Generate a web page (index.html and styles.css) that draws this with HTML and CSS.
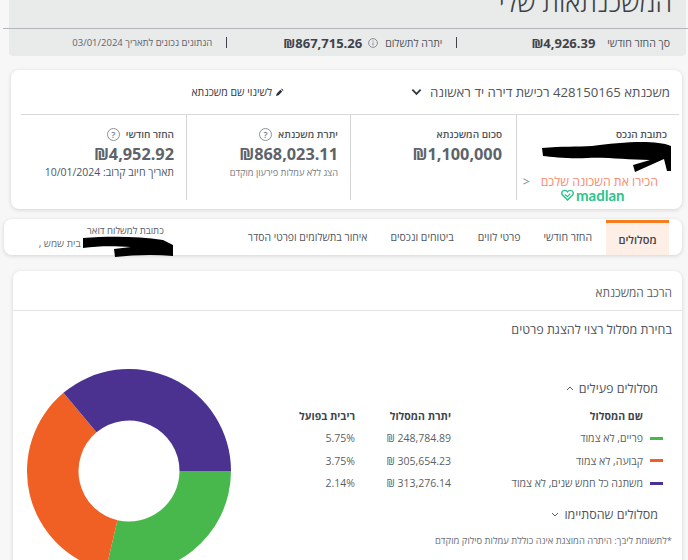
FILE: index.html
```html
<!DOCTYPE html>
<html lang="he" dir="rtl">
<head>
<meta charset="utf-8">
<title>המשכנתאות שלי</title>
<link rel="stylesheet" href="styles.css">
</head>
<body>
<div class="page">
  <header class="head">
    <h1 class="title">המשכנתאות שלי</h1>
    <div class="summary">
      <span class="sum-label">סך החזר חודשי</span>
      <b class="sum-value sum-first">₪4,926.39</b>
      <span class="sum-sep"></span>
      <span class="sum-label">יתרה לתשלום</span>
      <svg class="sum-info" viewBox="0 0 12 12"><circle cx="6" cy="6" r="4.400" fill="none" stroke="#8a8f96"/><path d="M6 5.500v3M6 3.500v1" stroke="#8a8f96"/></svg>
      <b class="sum-value">₪867,715.26</b>
      <span class="sum-sep sum-sep2"></span>
      <span class="sum-date">הנתונים נכונים לתאריך 03/01/2024</span>
    </div>
  </header>

  <section class="card loan">
    <div class="loan-top">
      <span class="loan-name">משכנתא 428150165 רכישת דירה יד ראשונה</span>
      <svg class="chev" viewBox="0 0 12 8"><path d="M1.500 1.500 6 6l4.500-4.500" fill="none" stroke="#33383e" stroke-width="2"/></svg>
      <span class="rename">
        <svg class="pencil" viewBox="0 0 10 10"><path d="M1 9l1-3 4-4 2 2-4 4zM6.800 1.200l.7-.7 2 2-.7.7z" fill="#2c3036"/></svg>
        לשינוי שם משכנתא
      </span>
    </div>
    <div class="stats">
      <div class="stat stat-address">
        <div class="stat-label">כתובת הנכס</div>
        <a class="madlan-link"><span class="madlan-text">הכירו את השכונה שלכם</span><span class="madlan-arrow">&lt;</span></a>
        <div class="madlan-logo">
          <span class="madlan-word" dir="ltr">madlan</span>
          <svg class="madlan-heart" viewBox="0 0 14 13"><path d="M7 12 1.500 6.500C0 4.500 1 1.500 4 1.500c1.300 0 2.300.6 3 1.500.7-.9 1.700-1.500 3-1.500 3 0 4 3 2.500 5Z" fill="none" stroke="#2dc38b" stroke-width="1.600"/><path d="m4 6 3 2 3-3" fill="none" stroke="#2dc38b" stroke-width="1.300"/></svg>
        </div>
        <svg class="scribble scribble-a" viewBox="0 0 130 30"><path d="M0 6C20 4 35 5 50 4C65 2 85 0 100 0C112 0 122 1 129 4L129 29L125 29L122 17L93 30L91 23L108 18C85 18 65 15 45 16C28 17 10 15 1 14Z" fill="#000"/></svg>
      </div>
      <div class="stat stat-total">
        <div class="stat-label">סכום המשכנתא</div>
        <div class="stat-value">₪1,100,000</div>
      </div>
      <div class="stat">
        <div class="stat-label">יתרת משכנתא <span class="q">?</span></div>
        <div class="stat-value">₪868,023.11</div>
        <div class="stat-note">הצג ללא עמלות פירעון מוקדם</div>
      </div>
      <div class="stat stat-last">
        <div class="stat-label">החזר חודשי <span class="q">?</span></div>
        <div class="stat-value">₪4,952.92</div>
        <div class="stat-sub">תאריך חיוב קרוב: 10/01/2024</div>
      </div>
    </div>
  </section>

  <nav class="card tabs">
    <span class="tab tab-active">מסלולים</span>
    <span class="tab tab1">החזר חודשי</span>
    <span class="tab tab2">פרטי לווים</span>
    <span class="tab tab3">ביטוחים ונכסים</span>
    <span class="tab tab4">איחור בתשלומים ופרטי הסדר</span>
    <div class="postal">
      <div class="postal-label">כתובת למשלוח דואר</div>
      <div class="postal-value">בית שמש ,</div>
      <svg class="scribble scribble-b" viewBox="0 0 90 22"><path d="M0 2C25 0 55 0 80 4L90 9L90 20C70 18 50 19 32 21L31 13L48 11C30 10 15 10 0 12Z" fill="#000"/></svg>
    </div>
  </nav>

  <section class="card panel">
    <div class="panel-title">הרכב המשכנתא</div>
    <div class="panel-body">
      <div class="pick">בחירת מסלול רצוי להצגת פרטים</div>
      <div class="split">
        <div class="details">
          <div class="group">מסלולים פעילים <svg class="caret" viewBox="0 0 8 5"><path d="M1 4 4 1l3 3" fill="none" stroke="#5a6068"/></svg></div>
          <table class="tracks">
            <thead>
              <tr><th class="c-name">שם המסלול</th><th class="c-bal">יתרת המסלול</th><th class="c-rate">ריבית בפועל</th></tr>
            </thead>
            <tbody>
              <tr><td class="c-name"><i class="sw sw-g"></i>פריים, לא צמוד</td><td class="c-bal">248,784.89 ₪</td><td class="c-rate">5.75%</td></tr>
              <tr><td class="c-name"><i class="sw sw-o"></i>קבועה, לא צמוד</td><td class="c-bal">305,654.23 ₪</td><td class="c-rate">3.75%</td></tr>
              <tr><td class="c-name"><i class="sw sw-p"></i>משתנה כל חמש שנים, לא צמוד</td><td class="c-bal">313,276.14 ₪</td><td class="c-rate">2.14%</td></tr>
            </tbody>
          </table>
          <div class="group group2">מסלולים שהסתיימו <svg class="caret" viewBox="0 0 8 5"><path d="M1 1l3 3 3-3" fill="none" stroke="#5a6068"/></svg></div>
          <div class="foot">*לתשומת ליבך: היתרה המוצגת אינה כוללת עמלות סילוק מוקדם</div>
        </div>
        <svg class="donut" viewBox="0 0 204 204">
          <path d="M204 102A102 102 0 0 1 78.700 201.300L90.470 151.170A50.500 50.500 0 0 0 152.500 102Z" fill="#48b74c"/>
          <path d="M78.700 201.300A102 102 0 0 1 36.430 23.860L69.540 63.310A50.500 50.500 0 0 0 90.470 151.170Z" fill="#f06025"/>
          <path d="M36.430 23.860A102 102 0 0 1 204 102L152.500 102A50.500 50.500 0 0 0 69.540 63.310Z" fill="#4b3291"/>
        </svg>
      </div>
    </div>
  </section>
</div>
</body>
</html>
```
FILE: styles.css
```css
* { box-sizing: border-box; }
html, body { margin: 0; padding: 0; }
body {
  background: #f7f7f7;
  font-family: "Open Sans", "Noto Sans", "Liberation Sans", sans-serif;
  color: #4f555c;
}
.page { width: 688px; height: 560px; overflow: hidden; }

.head { margin-left: 3px; }
.title {
  height: 29px;
  margin: 0;
  padding-right: 16px;
  font-size: 26.700px;
  font-weight: 300;
  line-height: 4px;
  color: #3d4248;
  background: linear-gradient(#e9eaea, #e9eaea) 6px 0 / 677px 100% no-repeat;
  border-bottom: 1px solid #b4b5bd;
  overflow: hidden;
  white-space: nowrap;
}
.summary {
  display: flex;
  align-items: center;
  height: 27px;
  margin: 0 2px 0 6px;
  padding-right: 16px;
  background: #e9eaea;
  border-radius: 0 0 4px 4px;
  font-size: 10.500px;
  white-space: nowrap;
}
.sum-value { font-size: 13px; font-weight: 700; color: #3f444b; }
.sum-first { margin-right: 12px; }
.sum-sep { width: 1px; height: 11px; background: #3f444b; margin: 0 74px 0 14px; }
.sum-sep2 { margin: 0 56px 0 14px; }
.sum-info { width: 12px; height: 12px; margin: 0 6px 0 5px; }
.sum-date { font-size: 9.500px; color: #5f646b; }

.card {
  background: #fff;
  border-radius: 8px;
  box-shadow: 0 1px 4px rgba(0, 0, 0, .14);
}
.loan {
  height: 139px;
  margin: 14px 6px 0 11px;
  padding: 0 3px 0 10px;
  display: flex;
  flex-direction: column;
}
.loan-top {
  height: 45px;
  display: flex;
  align-items: center;
  padding-right: 9px;
  border-bottom: 1px solid #d9d9d9;
  white-space: nowrap;
}
.loan-name { font-size: 13.200px; color: #50555c; }
.chev { width: 11px; height: 8px; margin-right: 8px; }
.rename { display: flex; align-items: center; gap: 3px; margin-right: 127px; font-size: 10.500px; color: #33383e; }
.pencil { width: 9px; height: 9px; }
.stats { display: grid; grid-template-columns: 163px 166px 164px 165px; height: 85px; }
.stat { position: relative; padding: 10px 12px 0 0; border-left: 1px solid #d4d4d4; }
.stat-last { border-left: 0; }
.stat-total { padding-right: 14px; }
.stat-label {
  height: 18px;
  display: flex;
  align-items: center;
  gap: 6px;
  font-size: 10px;
  font-weight: 600;
  color: #50555c;
  white-space: nowrap;
}
.q {
  width: 13px;
  height: 13px;
  border: 1px solid #8d9197;
  border-radius: 50%;
  display: flex;
  align-items: center;
  justify-content: center;
  font-size: 9px;
  color: #74797f;
}
.stat-value { font-size: 16.300px; font-weight: 700; line-height: 22px; color: #5e636a; white-space: nowrap; }
.stat-sub { font-size: 10.500px; line-height: 15px; color: #4f555c; white-space: nowrap; }
.stat-note { font-size: 9.200px; line-height: 12px; margin-top: 2px; color: #777b82; white-space: nowrap; }

.scribble { position: absolute; }
.scribble-a { width: 130px; height: 30px; top: 27px; left: 25px; }
.madlan-link {
  position: absolute;
  top: 59px;
  right: 21px;
  display: flex;
  gap: 11px;
  font-size: 12.300px;
  line-height: 16px;
  white-space: nowrap;
}
.madlan-text { color: #fa8a6f; }
.madlan-arrow { color: #85888d; }
.madlan-logo { position: absolute; top: 73px; left: 44px; display: flex; align-items: center; gap: 2px; }
.madlan-word { font-family: "Lato", sans-serif; font-weight: 700; font-size: 15px; line-height: 14px; color: #2dc38b; }
.madlan-heart { width: 13px; height: 12px; }

.tabs {
  height: 36px;
  margin: 10px 6px 0 4px;
  padding-right: 13px;
  display: flex;
  align-items: stretch;
  font-size: 10.500px;
  color: #50555c;
  white-space: nowrap;
}
.tab { display: flex; align-items: center; }
.tab-active {
  width: 63px;
  margin-top: 1px;
  justify-content: center;
  background: #fdefe5;
  border-top: 3px solid #f57c1f;
  font-weight: 600;
  font-size: 11px;
  color: #3f444b;
}
.tab1 { margin-right: 14px; }
.tab2 { margin-right: 23px; }
.tab3 { margin-right: 24px; }
.tab4 { margin-right: 23px; font-size: 10.400px; }
.postal { position: relative; margin-right: 84px; padding-top: 6px; font-size: 9.500px; }
.postal-label { line-height: 12px; color: #5c6168; }
.postal-value { line-height: 12px; padding-right: 83px; width: 126px; font-size: 10px; color: #6b7077; }
.scribble-b { width: 90px; height: 22px; top: 17px; right: -9px; }

.panel {
  height: 320px;
  margin: 16px 6px 0 13px;
}
.panel-title { height: 40px; padding: 13px 10px 0 0; font-size: 11.800px; line-height: 16px; color: #5a5f66; border-bottom: 1px solid #e3e3e3; }
.panel-body { padding: 10px 10px 0 0; }
.pick { font-size: 12.500px; line-height: 18px; color: #50555c; }
.split { position: relative; padding-top: 40px; }
.details { width: 400px; }
.group { display: flex; align-items: center; gap: 5px; height: 18px; padding-right: 14px; font-size: 12.500px; color: #50555c; }
.caret { width: 8px; height: 5px; }
.tracks { margin: 7px 29px 0 0; border-collapse: collapse; font-size: 10.500px; }
.tracks th { height: 23px; font-weight: 700; font-size: 10.500px; color: #40454b; text-align: right; padding: 0; }
.tracks td { height: 22.500px; padding: 0; text-align: right; color: #5a5f66; white-space: nowrap; }
.c-name { width: 192px; }
.c-bal { width: 96px; }
.c-rate { width: 70px; }
.sw { display: inline-block; width: 13px; height: 3px; margin: 0 -20px 2px 7px; vertical-align: middle; }
.sw-g { background: #48b74c; }
.sw-o { background: #f06025; }
.sw-p { background: #4b3291; }
.group2 { margin-top: 11px; }
.foot { margin-top: 10px; font-size: 9.400px; line-height: 14px; color: #6b7077; white-space: nowrap; }
.donut { position: absolute; top: 30px; left: 14px; width: 204px; height: 204px; }
```
